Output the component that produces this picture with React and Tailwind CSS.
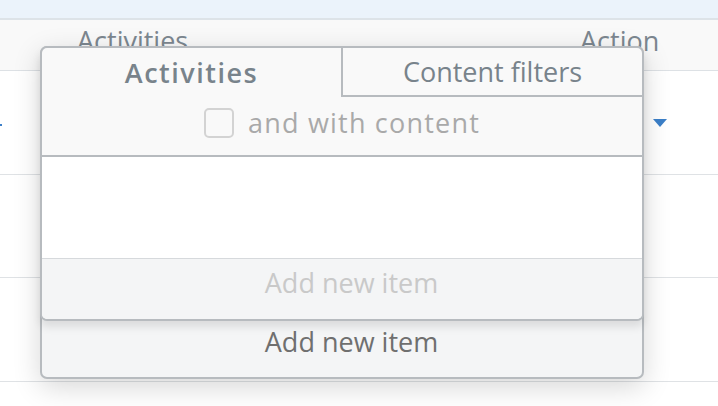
export default function App() {
  return (
    <div className="relative w-[718px] h-[406px] overflow-hidden bg-white font-['Open_Sans',sans-serif]">
      <div className="h-[18px] bg-[#ebf3fb] border-b-2 border-[#dde3e8] box-content" />
      <div className="h-[50px] bg-[#f9f9f9] border-b border-[#dde1e5] box-content flex text-[27px] text-[#7c8790] leading-[36px]">
        <div className="pl-[77px] pt-[3px] w-[580px]">Activities</div>
        <div className="pt-[3px]">Action</div>
      </div>
      <div className="h-[104px] border-b border-[#dfe2e5] flex items-center justify-between">
        <span className="w-[2px] h-[2px] bg-[#3d80c9] mt-[4px]" />
        <svg width="14" height="8" viewBox="0 0 14 8" className="mr-[51px]">
          <path d="M0 0 H14 L7 8 Z" fill="#3b7fc8" />
        </svg>
      </div>
      <div className="h-[103px] border-b border-[#dfe2e5]" />
      <div className="h-[104px] border-b border-[#dfe2e5]" />

      <div className="absolute left-[40px] top-[46px] w-[604px] h-[333px] border-2 border-[#b7bbbf] rounded-[7px] bg-[#f4f5f6] shadow-[0_8px_28px_rgba(0,0,0,0.16)] flex flex-col">
        <div className="-mx-[2px] -mt-[2px] h-[275px] border-2 border-[#b7bbbf] rounded-[7px] bg-[#f9f9f9] shadow-[0_6px_8px_rgba(0,0,0,0.10)] flex flex-col overflow-hidden">
          <div className="h-[49px] flex text-[27px] leading-[36px] text-[#78838b]">
            <div className="flex-1 flex items-center justify-center font-semibold tracking-[1.5px]">Activities</div>
            <div className="w-[301px] border-l-2 border-b-2 border-[#b7bbbf] flex items-center justify-center">Content filters</div>
          </div>
          <div className="h-[60px] pb-[6px] border-b-2 border-[#b7bbbf] flex items-center justify-center gap-[14px] text-[27px] leading-[36px] text-[#a9a9a9]">
            <span className="w-[30px] h-[30px] border-2 border-[#d3d3d3] rounded-[5px]" />
            <span className="tracking-[1.2px]">and with content</span>
          </div>
          <div className="h-[101px] bg-white" />
          <div className="flex-1 bg-[#f4f5f6] border-t border-[#d6d9dc] flex justify-center pl-[19px] pt-[6px] text-[27px] leading-[36px] text-[#c9c9c9]">
            Add new item
          </div>
        </div>
        <div className="flex-1 flex justify-center pl-[19px] pt-[3px] text-[27px] leading-[36px] text-[#6f6f6f]">Add new item</div>
      </div>
    </div>
  );
}
